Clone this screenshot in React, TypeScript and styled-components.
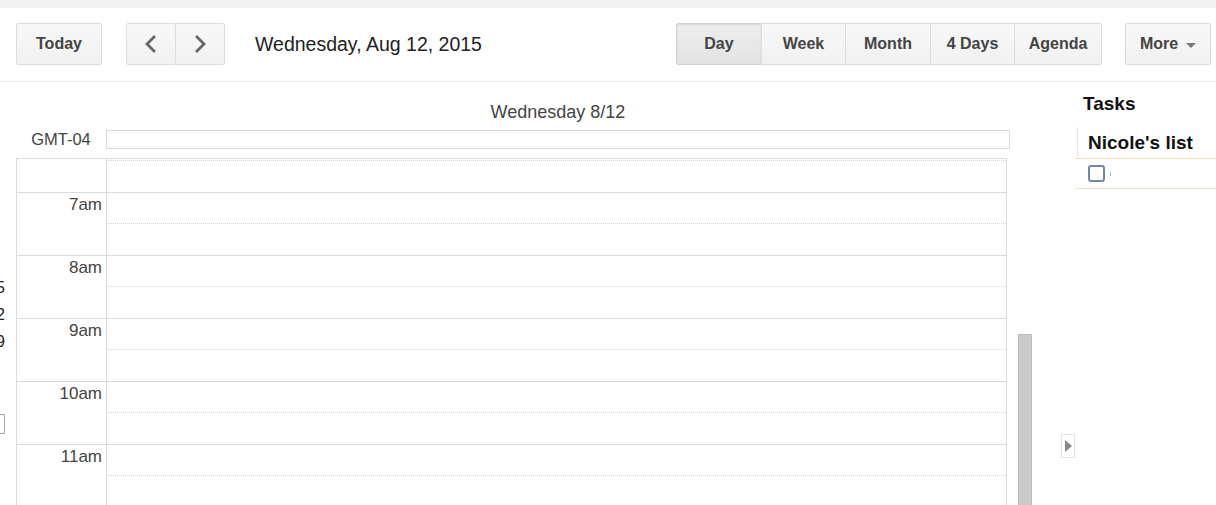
import React from 'react';
import styled, { createGlobalStyle } from 'styled-components';

const GlobalStyle = createGlobalStyle`
  html, body {
    margin: 0;
    padding: 0;
    overflow: hidden;
    background: #fff;
    font-family: "Liberation Sans", Arial, sans-serif;
  }
`;

const Page = styled.div`
  display: flex;
  flex-direction: column;
  height: 100vh;
  overflow: hidden;
`;

const TopStrip = styled.div`
  height: 8px;
  background: #f1f1f1;
`;

const Toolbar = styled.header`
  display: flex;
  align-items: flex-start;
  height: 74px;
  box-sizing: border-box;
  padding: 15px 5px 0 16px;
  border-bottom: 1px solid #e8e8e8;
`;

const Button = styled.button<{ w: number; active?: boolean }>`
  display: flex;
  align-items: center;
  justify-content: center;
  width: ${(p) => p.w}px;
  height: 42px;
  box-sizing: border-box;
  padding: 0;
  border: 1px solid ${(p) => (p.active ? '#cfcfcf' : '#dcdcdc')};
  border-radius: 2px;
  background: ${(p) =>
    p.active
      ? 'linear-gradient(#eeeeee, #e2e2e2)'
      : 'linear-gradient(#f8f8f8, #f1f1f1)'};
  box-shadow: ${(p) => (p.active ? 'inset 0 1px 2px rgba(0,0,0,0.1)' : 'none')};
  color: #444;
  font-family: "Liberation Sans", Arial, sans-serif;
  font-size: 16px;
  font-weight: bold;
  cursor: pointer;
`;

const Group = styled.div<{ gap?: number }>`
  display: flex;
  margin-left: ${(p) => p.gap ?? 0}px;

  & > button + button {
    margin-left: -1px;
    border-radius: 0;
  }
  & > button:first-child {
    border-radius: 2px 0 0 2px;
  }
  & > button:last-child {
    border-radius: 0 2px 2px 0;
  }
`;

const ViewGroup = styled(Group)`
  margin-left: auto;
`;

const DateTitle = styled.h1`
  margin: 0 0 0 30px;
  line-height: 42px;
  font-size: 19.5px;
  font-weight: normal;
  color: #222;
`;

const MoreButton = styled(Button)`
  margin-left: 23px;
  gap: 8px;
`;

const Caret = styled.span`
  width: 0;
  height: 0;
  border-left: 5px solid transparent;
  border-right: 5px solid transparent;
  border-top: 5px solid #777;
  margin-top: 2px;
`;

const Body = styled.div`
  flex: 1;
  min-height: 0;
  display: flex;
  overflow: hidden;
`;

const Sidebar = styled.aside`
  width: 16px;
  flex-shrink: 0;
  overflow: hidden;
`;

const MiniCal = styled.div`
  width: 45px;
  margin-left: -40px;
  padding-top: 192px;
  text-align: right;
  font-size: 16px;
  line-height: 27px;
  color: #222;
`;

const MiniBox = styled.div`
  width: 30px;
  height: 18px;
  margin: 59px 0 0 -27px;
  border: 1px solid #aaa;
`;

const Main = styled.main`
  width: 1016px;
  flex-shrink: 0;
  display: flex;
  flex-direction: column;
  min-height: 0;
`;

const DayTitle = styled.div`
  margin: 20px 22px 0 90px;
  text-align: center;
  font-size: 18px;
  line-height: 21px;
  color: #444;
`;

const AllDayRow = styled.div`
  display: flex;
  align-items: center;
  margin-top: 7px;
`;

const Zone = styled.div`
  width: 90px;
  text-align: center;
  font-size: 16.5px;
  color: #444;
`;

const AllDayBox = styled.div`
  width: 904px;
  height: 19px;
  box-sizing: border-box;
  border: 1px solid #dadada;
`;

const GridArea = styled.div`
  flex: 1;
  min-height: 0;
  display: flex;
  margin-top: 9px;
  overflow: hidden;
`;

const Grid = styled.div`
  width: 991px;
  box-sizing: border-box;
  border: 1px solid #dadada;
  border-bottom: none;
  flex-shrink: 0;
`;

const Row = styled.div<{ first?: boolean }>`
  display: flex;
  height: ${(p) => (p.first ? 33 : 63)}px;
  box-sizing: border-box;
  border-top: ${(p) => (p.first ? 'none' : '1px solid #dadada')};
`;

const TimeCell = styled.div`
  width: 90px;
  box-sizing: border-box;
  padding: 2px 4px 0 0;
  border-right: 1px solid #dadada;
  text-align: right;
  font-size: 17px;
  color: #444;
`;

const Slot = styled.div<{ first?: boolean }>`
  flex: 1;
  display: flex;
  flex-direction: column;
  margin-top: ${(p) => (p.first ? 1 : 0)}px;
  border-top: ${(p) => (p.first ? '1px dotted #d4d4d4' : 'none')};
`;

const HalfHour = styled.div`
  height: 31px;
  box-sizing: border-box;
  border-bottom: 1px dotted #d4d4d4;
`;

const ScrollTrack = styled.div`
  width: 14px;
  margin-left: 11px;
  padding-top: 176px;
  box-sizing: border-box;
`;

const ScrollThumb = styled.div`
  height: 400px;
  box-sizing: border-box;
  background: #cbcbcb;
  border: 1px solid #b6b6b6;
  border-right-color: #c0c0c0;
`;

const ToggleColumn = styled.div`
  width: 43px;
  flex-shrink: 0;
  display: flex;
  justify-content: flex-end;
  align-items: flex-start;
  padding-top: 352px;
  box-sizing: border-box;
`;

const ToggleButton = styled.div`
  width: 14px;
  height: 24px;
  box-sizing: border-box;
  border: 1px solid #e3e3e3;
  display: flex;
  align-items: center;
  justify-content: center;
`;

const RightArrow = styled.span`
  width: 0;
  height: 0;
  border-top: 6px solid transparent;
  border-bottom: 6px solid transparent;
  border-left: 7px solid #888;
  margin-left: 1px;
`;

const Tasks = styled.section`
  flex: 1;
  min-width: 0;
`;

const TasksTitle = styled.h2`
  margin: 11px 0 0 8px;
  font-size: 19px;
  line-height: 22px;
  font-weight: bold;
  color: #111;
`;

const ListHead = styled.div`
  margin-top: 12px;
  border-bottom: 1px solid #efe3b5;
`;

const ListName = styled.h3`
  margin: 0 0 0 2px;
  padding-left: 10px;
  height: 31px;
  line-height: 31px;
  border-left: 1px solid #e6e6e6;
  font-size: 19px;
  font-weight: bold;
  color: #111;
  white-space: nowrap;
`;

const TaskRow = styled.div`
  display: flex;
  align-items: center;
  height: 30px;
  box-sizing: border-box;
  padding-left: 13px;
  border-bottom: 1px solid #efe3b5;
`;

const Check = styled.span`
  width: 17px;
  height: 17px;
  box-sizing: border-box;
  border: 2px solid #7585a6;
  border-radius: 3px;
  background: #fff;
`;

const Caret2 = styled.span`
  width: 1px;
  height: 4px;
  margin-left: 5px;
  background: #a9b8d8;
`;

const Chevron = ({ dir }: { dir: 'left' | 'right' }) => (
  <svg width="14" height="20" viewBox="0 0 14 20">
    <polyline
      points={dir === 'left' ? '11,2 3,10 11,18' : '3,2 11,10 3,18'}
      fill="none"
      stroke="#666"
      strokeWidth="2.8"
    />
  </svg>
);

const hours = ['7am', '8am', '9am', '10am', '11am', '12pm', '1pm'];

export default function App() {
  return (
    <Page>
      <GlobalStyle />
      <TopStrip />
      <Toolbar>
        <Button w={86}>Today</Button>
        <Group gap={24}>
          <Button w={50}>
            <Chevron dir="left" />
          </Button>
          <Button w={50}>
            <Chevron dir="right" />
          </Button>
        </Group>
        <DateTitle>Wednesday, Aug 12, 2015</DateTitle>
        <ViewGroup>
          <Button w={86} active>
            Day
          </Button>
          <Button w={85}>Week</Button>
          <Button w={86}>Month</Button>
          <Button w={85}>4 Days</Button>
          <Button w={88}>Agenda</Button>
        </ViewGroup>
        <MoreButton w={86}>
          More <Caret />
        </MoreButton>
      </Toolbar>

      <Body>
        <Sidebar>
          <MiniCal>
            <div>5</div>
            <div>2</div>
            <div>9</div>
          </MiniCal>
          <MiniBox />
        </Sidebar>

        <Main>
          <DayTitle>Wednesday 8/12</DayTitle>
          <AllDayRow>
            <Zone>GMT-04</Zone>
            <AllDayBox />
          </AllDayRow>
          <GridArea>
            <Grid>
              <Row first>
                <TimeCell />
                <Slot first />
              </Row>
              {hours.map((h) => (
                <Row key={h}>
                  <TimeCell>{h}</TimeCell>
                  <Slot>
                    <HalfHour />
                  </Slot>
                </Row>
              ))}
            </Grid>
            <ScrollTrack>
              <ScrollThumb />
            </ScrollTrack>
          </GridArea>
        </Main>

        <ToggleColumn>
          <ToggleButton>
            <RightArrow />
          </ToggleButton>
        </ToggleColumn>

        <Tasks>
          <TasksTitle>Tasks</TasksTitle>
          <ListHead>
            <ListName>Nicole's list</ListName>
          </ListHead>
          <TaskRow>
            <Check />
            <Caret2 />
          </TaskRow>
        </Tasks>
      </Body>
    </Page>
  );
}
